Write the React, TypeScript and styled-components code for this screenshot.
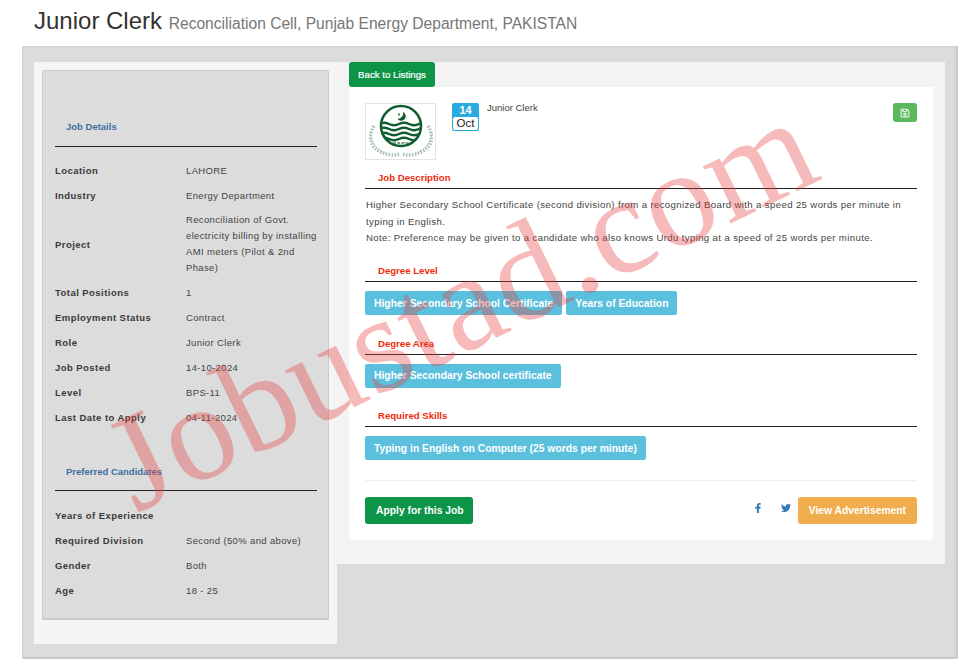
import React from "react";
import styled, { createGlobalStyle } from "styled-components";
import { FaFacebookF, FaTwitter, FaRegSave } from "react-icons/fa";

const GlobalStyle = createGlobalStyle`
    html, body {
        margin: 0;
        padding: 0;
        background: #fff;
        font-family: "Liberation Sans", Arial, sans-serif;
        color: #333;
    }
`

const jobDetails = [
    { label: "Location", value: "LAHORE" },
    { label: "Industry", value: "Energy Department" },
    { label: "Project", value: "Reconciliation of Govt.\nelectricity billing by installing\nAMI meters (Pilot & 2nd\nPhase)" },
    { label: "Total Positions", value: "1" },
    { label: "Employment Status", value: "Contract" },
    { label: "Role", value: "Junior Clerk" },
    { label: "Job Posted", value: "14-10-2024" },
    { label: "Level", value: "BPS-11" },
    { label: "Last Date to Apply", value: "04-11-2024" },
]

const candidates = [
    { label: "Years of Experience", value: "" },
    { label: "Required Division", value: "Second (50% and above)" },
    { label: "Gender", value: "Both" },
    { label: "Age", value: "18 - 25" },
]

const PunjabLogo = () => (
    <svg width="69" height="55" viewBox="0 0 69 55">
        <defs>
            <clipPath id="logoInner">
                <circle cx="35" cy="22" r="19" />
            </clipPath>
        </defs>
        <g fill="none" stroke="#a9c2b0">
            <path d="M8 22 C2 32 4 42 13 47 C20 51 27 52 34 50" strokeWidth="3.5" strokeDasharray="1.5 1.5" />
            <path d="M62 22 C68 32 66 42 57 47 C50 51 43 52 36 50" strokeWidth="3.5" strokeDasharray="1.5 1.5" />
            <path d="M4 28 C5 38 11 47 22 50" strokeWidth="1" strokeDasharray="2 1" />
            <path d="M66 28 C65 38 59 47 48 50" strokeWidth="1" strokeDasharray="2 1" />
        </g>
        <circle cx="35" cy="22" r="20" fill="#fff" stroke="#0f5c2e" strokeWidth="2.6" />
        <path d="M37 8 A4.6 4.6 0 1 1 31.5 15 A5.6 5.6 0 0 0 37 8 Z" fill="#0f5c2e" />
        <circle cx="33" cy="10.5" r="1" fill="#0f5c2e" />
        <g fill="none" stroke="#0f5c2e" strokeWidth="2.3" clipPath="url(#logoInner)">
            <path d="M13 20 Q18 17.5 23 20 T33 20 T43 20 T53 20 T60 20" />
            <path d="M13 25 Q18 22.5 23 25 T33 25 T43 25 T53 25 T60 25" />
            <path d="M13 30 Q18 27.5 23 30 T33 30 T43 30 T53 30 T60 30" />
            <path d="M13 35 Q18 32.5 23 35 T33 35 T43 35 T53 35 T60 35" />
        </g>
        <path d="M27 39 H44" stroke="#4f8463" strokeWidth="1.4" strokeDasharray="3 1.2" />
    </svg>
)

const DetailList = ({ rows }: { rows: { label: string, value: string }[] }) => (
    <div>
        {rows.map((row) => (
            <DetailRow key={row.label}>
                <DetailLabel>{row.label}</DetailLabel>
                <DetailValue>{row.value}</DetailValue>
            </DetailRow>
        ))}
    </div>
)

export default function App() {
    return (
        <Page>
            <GlobalStyle />
            <Title>Junior Clerk <small>Reconciliation Cell, Punjab Energy Department, PAKISTAN</small></Title>
            <OuterBox>
                <Sidebar>
                    <SidePanel>
                        <PanelHeading $first>Job Details</PanelHeading>
                        <DetailList rows={jobDetails} />
                        <PanelHeading>Preferred Candidates</PanelHeading>
                        <DetailList rows={candidates} />
                    </SidePanel>
                </Sidebar>
                <Main>
                    <BackButton>Back to Listings</BackButton>
                    <Card>
                        <CardTop>
                            <LogoFrame><PunjabLogo /></LogoFrame>
                            <DateBadge>
                                <DateDay>14</DateDay>
                                <DateMonth>Oct</DateMonth>
                            </DateBadge>
                            <JobName>Junior Clerk</JobName>
                            <SaveButton><FaRegSave size={10} /></SaveButton>
                        </CardTop>
                        <SectionHeading>Job Description</SectionHeading>
                        <Description>
                            Higher Secondary School Certificate (second division) from a recognized Board with a speed 25 words per minute in typing in English.<br />
                            Note: Preference may be given to a candidate who also knows Urdu typing at a speed of 25 words per minute.
                        </Description>
                        <SectionHeading>Degree Level</SectionHeading>
                        <TagRow>
                            <Tag>Higher Secondary School Certificate</Tag>
                            <Tag>Years of Education</Tag>
                        </TagRow>
                        <SectionHeading>Degree Area</SectionHeading>
                        <TagRow>
                            <Tag>Higher Secondary School certificate</Tag>
                        </TagRow>
                        <SectionHeading>Required Skills</SectionHeading>
                        <TagRow>
                            <Tag>Typing in English on Computer (25 words per minute)</Tag>
                        </TagRow>
                        <CardFooter>
                            <ApplyButton>Apply for this Job</ApplyButton>
                            <Actions>
                                <SocialLink><FaFacebookF size={10} /></SocialLink>
                                <SocialLink><FaTwitter size={10} /></SocialLink>
                                <AdvertButton>View Advertisement</AdvertButton>
                            </Actions>
                        </CardFooter>
                    </Card>
                </Main>
            </OuterBox>
            <Watermark>Jobustad.com</Watermark>
        </Page>
    )
}

const Page = styled.div`
    position: relative;
    width: 972px;
    height: 664px;
    overflow: hidden;
`

const Title = styled.h1`
    margin: 0;
    padding: 7px 0 0 34px;
    height: 46px;
    box-sizing: border-box;
    font-size: 24px;
    line-height: 28px;
    font-weight: 400;
    color: #333;

    small {
        font-size: 15.6px;
        color: #777;
    }
`

const OuterBox = styled.div`
    display: flex;
    align-items: flex-start;
    box-sizing: border-box;
    width: 936px;
    height: 613px;
    margin-left: 22px;
    padding: 16px 12px 0 12px;
    background: #dcdcdc;
    box-shadow: inset -2px -2px 2px #c8c8c8, inset 1px 1px 2px #cfcfcf;
    border-radius: 2px;
`

const Sidebar = styled.div`
    box-sizing: border-box;
    width: 303px;
    height: 582px;
    padding: 8px;
    background: #f5f5f5;
`

const SidePanel = styled.div`
    box-sizing: border-box;
    height: 550px;
    padding: 0 11px 0 12px;
    background: #dcdcdc;
    border: 1px solid #cbcbcb;
    border-bottom-width: 2px;
    border-radius: 2px;
`

const PanelHeading = styled.div<{ $first?: boolean }>`
    margin: ${(p) => (p.$first ? "50px 0 11px" : "36px 0 12px")};
    padding: 0 0 ${(p) => (p.$first ? "13px" : "12px")} 11px;
    border-bottom: 1px solid #222;
    font-size: 9.5px;
    line-height: 12px;
    font-weight: 700;
    color: #3f6f9f;
`

const DetailRow = styled.div`
    display: flex;
    align-items: center;
    box-sizing: border-box;
    min-height: 25px;
    padding: 4px 0;
`

const DetailLabel = styled.div`
    flex: 0 0 131px;
    font-size: 9.5px;
    font-weight: 700;
    letter-spacing: 0.45px;
    color: #3a3a3a;
`

const DetailValue = styled.div`
    flex: 1;
    min-width: 0;
    white-space: pre;
    font-size: 9.5px;
    line-height: 16px;
    letter-spacing: 0.36px;
    color: #444;
`

const Main = styled.div`
    box-sizing: border-box;
    width: 608px;
    height: 502px;
    padding: 0 12px;
    background: #f3f3f3;
`

const BackButton = styled.div`
    display: flex;
    align-items: center;
    justify-content: center;
    box-sizing: border-box;
    width: 86px;
    height: 25px;
    padding-bottom: 1px;
    background: #0c9447;
    border-radius: 3px;
    color: #fff;
    font-size: 9.7px;
    font-weight: 400;
    -webkit-text-stroke: 0.2px #fff;
`

const Card = styled.div`
    box-sizing: border-box;
    height: 453px;
    padding: 16px 16px 0;
    background: #fff;
    border-radius: 0 0 2px 2px;
`

const CardTop = styled.div`
    display: flex;
    align-items: flex-start;
    height: 57px;
`

const LogoFrame = styled.div`
    display: flex;
    align-items: center;
    justify-content: center;
    box-sizing: border-box;
    width: 71px;
    height: 57px;
    border: 1px solid #e3e3e3;
`

const DateBadge = styled.div`
    box-sizing: border-box;
    width: 27px;
    height: 28px;
    margin-left: 16px;
    padding: 0 1px 1px;
    background: #29abe2;
    border-radius: 2px;
    text-align: center;
`

const DateDay = styled.div`
    height: 14px;
    font-size: 11px;
    line-height: 15px;
    font-weight: 700;
    color: #fff;
`

const DateMonth = styled.div`
    height: 13px;
    background: #fff;
    border-radius: 2px;
    font-size: 11.5px;
    line-height: 13px;
    color: #222;
`

const JobName = styled.div`
    margin-left: 8px;
    font-size: 9.5px;
    line-height: 10px;
    color: #444;
`

const SaveButton = styled.div`
    display: flex;
    align-items: center;
    justify-content: center;
    width: 24px;
    height: 19px;
    margin-left: auto;
    background: #5cb85c;
    border-radius: 3px;
    color: #fff;
`

const SectionHeading = styled.div`
    margin-top: 12px;
    padding: 0 0 4px 13px;
    border-bottom: 1px solid #222;
    font-size: 9.6px;
    line-height: 12px;
    font-weight: 700;
    color: #ee2c0c;
`

const Description = styled.p`
    margin: 8px 0 0;
    padding: 0 1px;
    height: 56px;
    font-size: 9.6px;
    line-height: 16.5px;
    letter-spacing: 0.37px;
    color: #444;
`

const TagRow = styled.div`
    display: flex;
    gap: 4px;
    margin-top: 9px;
    padding-bottom: 10.5px;
`

const Tag = styled.div`
    display: flex;
    align-items: center;
    height: 24px;
    padding: 0 9px;
    background: #5bc0de;
    border-radius: 2px;
    color: #fff;
    font-size: 10.35px;
    font-weight: 700;
`

const CardFooter = styled.div`
    display: flex;
    align-items: center;
    justify-content: space-between;
    margin-top: 9px;
    padding-top: 16px;
    border-top: 1px solid #eee;
`

const ApplyButton = styled.div`
    display: flex;
    align-items: center;
    box-sizing: border-box;
    width: 108px;
    height: 27px;
    padding: 1px 0 0 11px;
    background: #0c9447;
    border-radius: 3px;
    color: #fff;
    font-size: 10.3px;
    font-weight: 700;
`

const Actions = styled.div`
    display: flex;
    align-items: center;
`

const SocialLink = styled.span`
    display: flex;
    margin-right: 18px;
    margin-bottom: 4px;
    color: #337ab7;

    &:nth-child(2) {
        margin-right: 7px;
    }
`

const AdvertButton = styled.div`
    display: flex;
    align-items: center;
    height: 27px;
    padding: 1px 11px 0;
    box-sizing: border-box;
    background: #f0ad4e;
    border-radius: 3px;
    color: #fff;
    font-size: 10.3px;
    font-weight: 700;
`

const Watermark = styled.div`
    position: absolute;
    left: 77px;
    top: 234px;
    font-family: "Liberation Serif", "Times New Roman", serif;
    font-size: 138px;
    line-height: 140px;
    white-space: nowrap;
    color: rgba(232, 64, 64, 0.36);
    letter-spacing: 1px;
    transform: rotate(-26deg);
    pointer-events: none;
`
